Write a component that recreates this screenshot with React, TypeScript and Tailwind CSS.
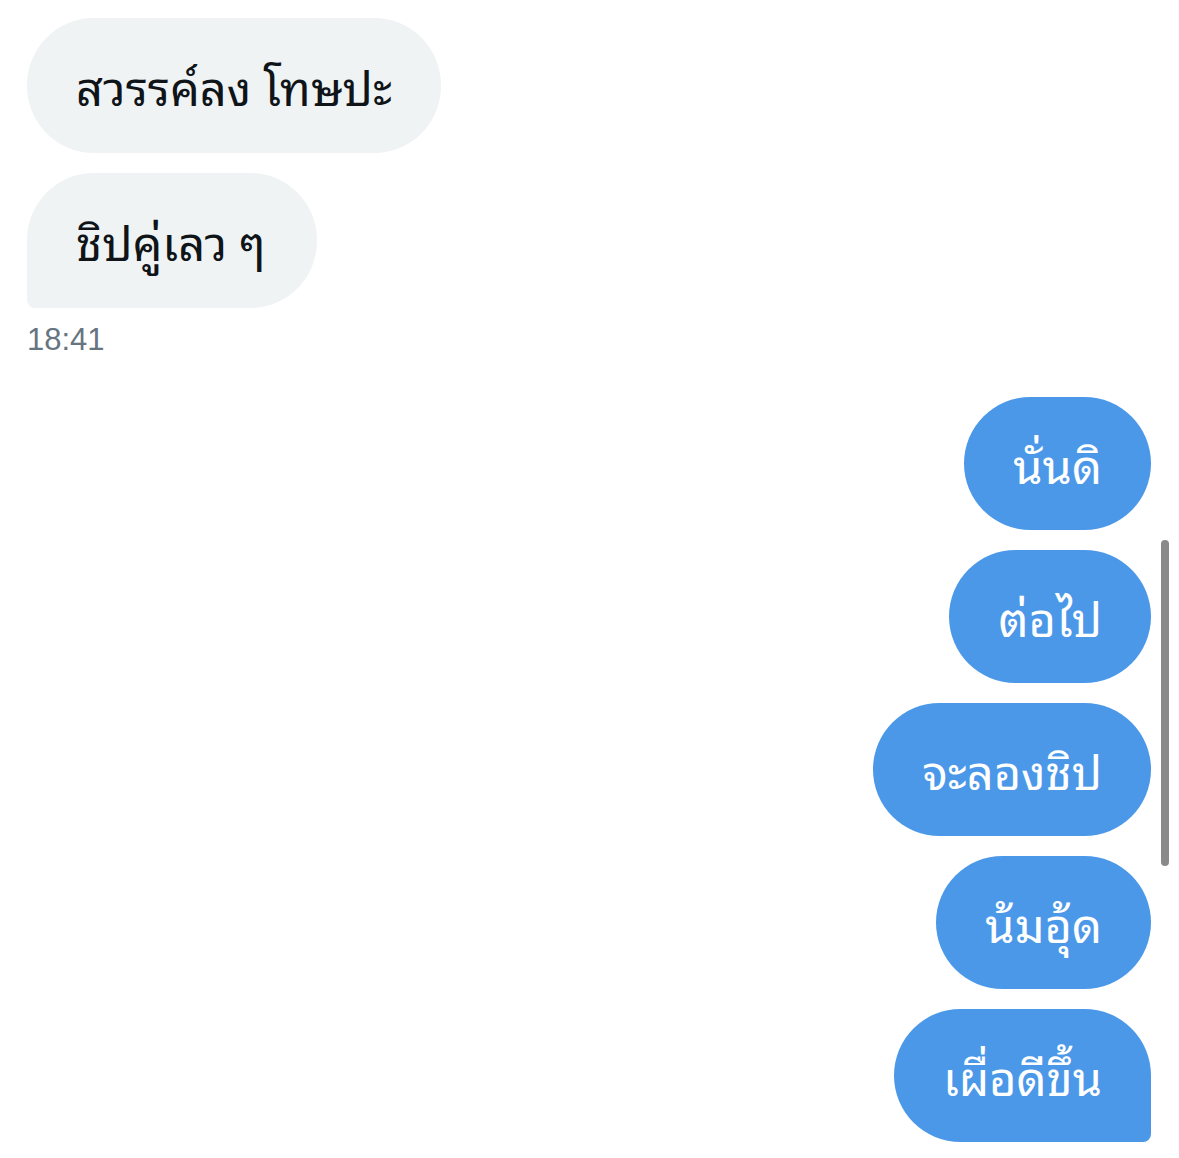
const incoming = ['สวรรค์ลง โทษปะ', 'ชิปคู่เลว ๆ'];
const outgoing = ['นั่นดิ', 'ต่อไป', 'จะลองชิป', 'น้มอุ้ด', 'เผื่อดีขึ้น'];

const thai = {
  fontFamily: '"Noto Sans Thai Looped", "Loma", "Garuda", "Tlwg Typo", "Noto Serif Thai", "Noto Sans Thai", "Noto Sans", sans-serif',
};

export default function App() {
  return (
    <div className="relative w-[1179px] h-[1158px] bg-white overflow-hidden" style={thai}>
      <div className="flex flex-col pt-[18px] pl-[27px] pr-[28px]">
        <div className="flex flex-col items-start gap-[20px]">
          {incoming.map((t, i) => (
            <div
              key={t}
              className={`h-[135px] flex items-center px-[49px] bg-[#eff3f4] text-[#0f1419] text-[47px] rounded-[67px] ${
                i === incoming.length - 1 ? 'rounded-bl-[8px] pr-[52px]' : ''
              }`}
            >
              {t}
            </div>
          ))}
        </div>
        <div className="mt-[12px] text-[31px] leading-[40px] text-[#66757f]" style={{ fontFamily: '"Liberation Sans", Arial, sans-serif' }}>
          18:41
        </div>
        <div className="mt-[37px] flex flex-col items-end gap-[20px]">
          {outgoing.map((t, i) => (
            <div
              key={t}
              className={`h-[133px] flex items-center px-[49px] bg-[#4b98e9] text-white text-[47px] rounded-[67px] ${
                i === outgoing.length - 1 ? 'rounded-br-[8px]' : ''
              }`}
            >
              {t}
            </div>
          ))}
        </div>
      </div>
      {/* scroll indicator */}
      <div className="absolute left-[1161px] top-[540px] w-[8px] h-[326px] rounded-full bg-[#8a8a8a]" />
    </div>
  );
}
